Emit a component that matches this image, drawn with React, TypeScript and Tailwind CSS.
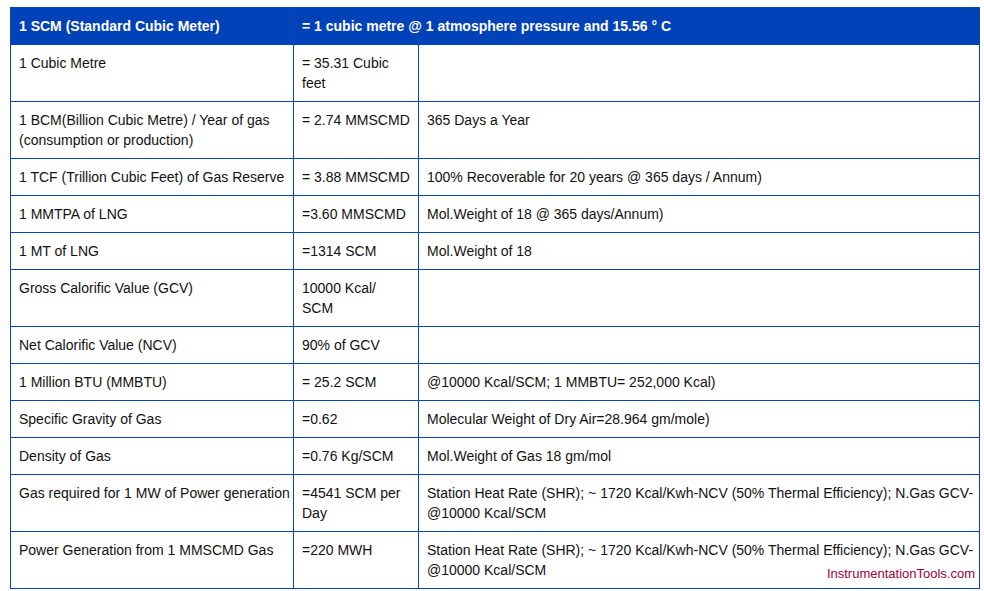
import React from "react";

const shr =
  "Station Heat Rate (SHR); ~ 1720 Kcal/Kwh-NCV (50% Thermal Efficiency); N.Gas GCV-\u200B@10000 Kcal/SCM";

const rows: [React.ReactNode, React.ReactNode, React.ReactNode][] = [
  ["1 Cubic Metre", "= 35.31 Cubic feet", ""],
  ["1 BCM(Billion Cubic Metre) / Year of gas (consumption or production)", "= 2.74 MMSCMD", "365 Days a Year"],
  ["1 TCF (Trillion Cubic Feet) of Gas Reserve", "= 3.88 MMSCMD", "100% Recoverable for 20 years @ 365 days / Annum)"],
  ["1 MMTPA of LNG", "=3.60 MMSCMD", "Mol.Weight of 18 @ 365 days/Annum)"],
  ["1 MT of LNG", "=1314 SCM", "Mol.Weight of 18"],
  [
    "Gross Calorific Value (GCV)",
    <>
      10000 Kcal/
      <br />
      SCM
    </>,
    "",
  ],
  ["Net Calorific Value (NCV)", "90% of GCV", ""],
  ["1 Million BTU (MMBTU)", "= 25.2 SCM", "@10000 Kcal/SCM; 1 MMBTU= 252,000 Kcal)"],
  ["Specific Gravity of Gas", "=0.62", "Molecular Weight of Dry Air=28.964 gm/mole)"],
  ["Density of Gas", "=0.76 Kg/SCM", "Mol.Weight of Gas 18 gm/mol"],
  ["Gas required for 1 MW of Power generation", "=4541 SCM per Day", shr],
  ["Power Generation from 1 MMSCMD Gas", "=220 MWH", shr],
];

const cell = "border border-[#0a43b5] pl-2 pr-[3px] py-2 align-top leading-5";

const App: React.FC = () => {
  return (
    <div
      className="bg-white w-[984px] h-[591px] pl-[10px] pt-[7px] text-[14px] text-[#111]"
      style={{ fontFamily: '"Liberation Sans", Arial, sans-serif' }}
    >
      <div className="relative w-[970px]">
        <table className="w-[970px] table-fixed border-collapse">
          <colgroup>
            <col className="w-[283px]" />
            <col className="w-[125px]" />
            <col />
          </colgroup>
          <thead>
            <tr className="bg-[#0242b9] text-white font-bold">
              <th className={`${cell} text-left`}>1 SCM (Standard Cubic Meter)</th>
              <th colSpan={2} className={`${cell} text-left`}>
                = 1 cubic metre @ 1 atmosphere pressure and 15.56 ° C
              </th>
            </tr>
          </thead>
          <tbody>
            {rows.map((row, i) => (
              <tr key={i}>
                {row.map((content, j) => (
                  <td key={j} className={cell}>
                    {content}
                  </td>
                ))}
              </tr>
            ))}
          </tbody>
        </table>
        {/* watermark sits over the last row */}
        <span className="absolute right-[5px] bottom-[6px] text-[13px] text-[#a0003c]">
          InstrumentationTools.com
        </span>
      </div>
    </div>
  );
};

export default App;
